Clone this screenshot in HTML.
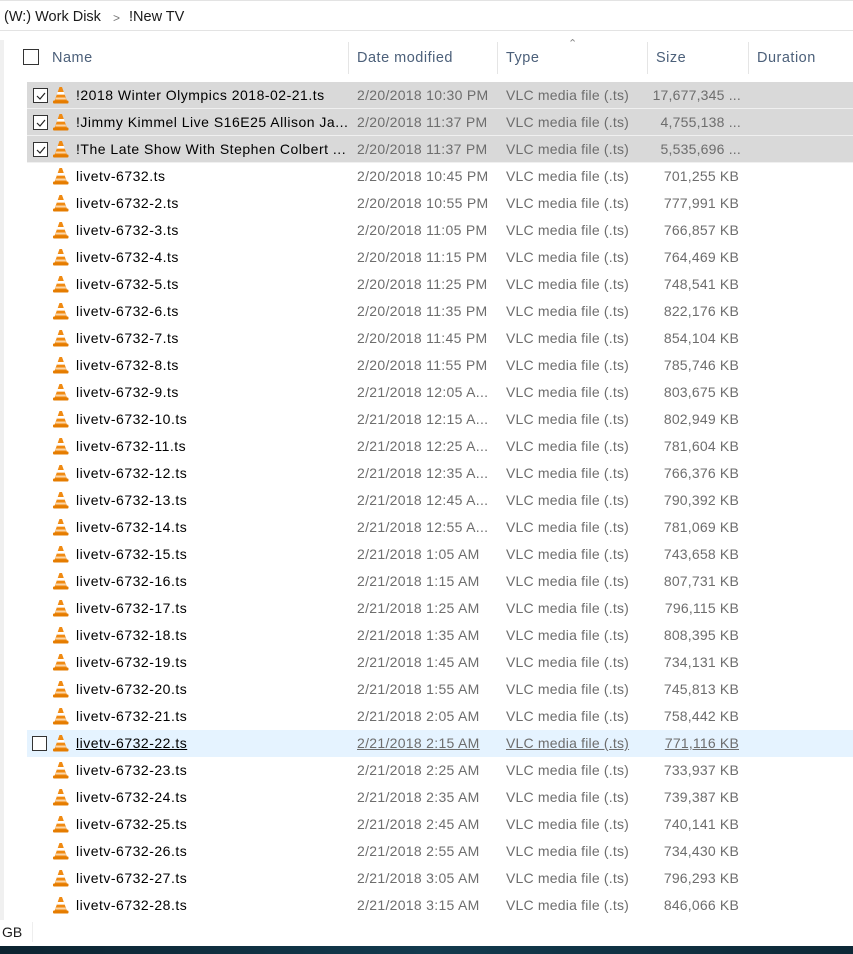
<!DOCTYPE html>
<html><head><meta charset="utf-8"><style>
*{margin:0;padding:0;box-sizing:border-box}
body{width:853px;height:954px;overflow:hidden;background:#fff;font-family:"Liberation Sans",sans-serif;font-size:14px;position:relative}
.crumb{position:absolute;left:0;top:0;width:853px;height:31px;border-bottom:1px solid #e3e3e3;border-top:1px solid #e3e3e3}
.crumb span{position:absolute;top:8px;color:#1a1a1a;font-size:14.5px}
.left{position:absolute;left:0;top:40px;width:4px;height:880px;background:#f0f0f0}
.hdr{position:absolute;top:40px;left:0;width:853px;height:36px}
.hdr span{position:absolute;top:10px;color:#4c607a;font-size:14.5px;letter-spacing:0.5px}
.sep{position:absolute;top:42px;width:1px;height:32px;background:#e5e5e5}
.cb{position:absolute;width:15px;height:15px;border:1px solid #333;background:#fff}
.r{position:absolute;left:27px;width:826px;height:27px}
.sel{background:#d9d9d9;border-bottom:1px solid #f0f0f0}
.hov{background:#e5f3ff}
.r span{position:absolute;top:5px;white-space:nowrap}
.n{left:49px;color:#000;letter-spacing:0.5px}
.d{left:330px;color:#6d6d6d;letter-spacing:0.3px}
.t{left:479px;color:#6d6d6d;letter-spacing:0.2px}
.s{right:114px;color:#6d6d6d;letter-spacing:0.2px}
.hov span{text-decoration:underline}
.r svg{position:absolute;left:25px;top:4px}
.r .cb{left:5px;top:6px}
.status{position:absolute;left:0;top:920px;width:853px;height:26px}
.status span{position:absolute;left:2px;top:4px;color:#1a1a1a}
.dark{position:absolute;left:0;top:946px;width:853px;height:8px;background:linear-gradient(90deg,#0c2330,#123a4e 50%,#0d2836)}
</style></head><body>
<div class="crumb"><span style="left:4px">(W:) Work Disk</span><span style="left:113px;color:#777;font-size:12px;top:10px">&gt;</span><span style="left:129px">!New TV</span></div>
<div class="left"></div>
<div class="hdr">
<div class="cb" style="left:23px;top:9px;width:16px;height:16px"></div>
<span style="left:52px">Name</span><span style="left:357px">Date modified</span><span style="left:506px">Type</span><span style="left:656px">Size</span><span style="left:757px">Duration</span>
<span style="left:568px;top:-3px;font-size:11px;color:#888">&#8963;</span>
</div>
<div class="sep" style="left:348px"></div><div class="sep" style="left:497px"></div><div class="sep" style="left:647px"></div><div class="sep" style="left:748px"></div>
<svg width="0" height="0" style="position:absolute"><defs><g id="cone"><path d="M7.5 1 L10 1 L15 15 L2.5 15 Z" fill="#f08a12"/><path d="M5.6 6 L11.9 6 L12.8 8.6 L4.7 8.6 Z" fill="#fff"/><path d="M4 11.5 L13.5 11.5 L14.2 13.5 L3.3 13.5Z" fill="#fbd6a8"/><rect x="1" y="14.5" width="15.5" height="3" rx="1" fill="#e57c00"/></g></defs></svg>
<div class="r sel" style="top:82px"><div class="cb" style="left:6px;top:6px"><svg style="left:1px;top:1px" width="12" height="12"><path d="M2 6 L5 9 L10 3" stroke="#222" stroke-width="1.2" fill="none"/></svg></div><svg width="17" height="18"><use href="#cone"/></svg><span class="n">!2018 Winter Olympics 2018-02-21.ts</span><span class="d">2/20/2018 10:30 PM</span><span class="t">VLC media file (.ts)</span><span class="s" style="right:112px">17,677,345 ...</span></div>
<div class="r sel" style="top:109px"><div class="cb" style="left:6px;top:6px"><svg style="left:1px;top:1px" width="12" height="12"><path d="M2 6 L5 9 L10 3" stroke="#222" stroke-width="1.2" fill="none"/></svg></div><svg width="17" height="18"><use href="#cone"/></svg><span class="n">!Jimmy Kimmel Live S16E25 Allison Ja...</span><span class="d">2/20/2018 11:37 PM</span><span class="t">VLC media file (.ts)</span><span class="s" style="right:112px">4,755,138 ...</span></div>
<div class="r sel" style="top:136px"><div class="cb" style="left:6px;top:6px"><svg style="left:1px;top:1px" width="12" height="12"><path d="M2 6 L5 9 L10 3" stroke="#222" stroke-width="1.2" fill="none"/></svg></div><svg width="17" height="18"><use href="#cone"/></svg><span class="n">!The Late Show With Stephen Colbert ...</span><span class="d">2/20/2018 11:37 PM</span><span class="t">VLC media file (.ts)</span><span class="s" style="right:112px">5,535,696 ...</span></div>
<div class="r" style="top:163px"><svg width="17" height="18"><use href="#cone"/></svg><span class="n">livetv-6732.ts</span><span class="d">2/20/2018 10:45 PM</span><span class="t">VLC media file (.ts)</span><span class="s">701,255 KB</span></div>
<div class="r" style="top:190px"><svg width="17" height="18"><use href="#cone"/></svg><span class="n">livetv-6732-2.ts</span><span class="d">2/20/2018 10:55 PM</span><span class="t">VLC media file (.ts)</span><span class="s">777,991 KB</span></div>
<div class="r" style="top:217px"><svg width="17" height="18"><use href="#cone"/></svg><span class="n">livetv-6732-3.ts</span><span class="d">2/20/2018 11:05 PM</span><span class="t">VLC media file (.ts)</span><span class="s">766,857 KB</span></div>
<div class="r" style="top:244px"><svg width="17" height="18"><use href="#cone"/></svg><span class="n">livetv-6732-4.ts</span><span class="d">2/20/2018 11:15 PM</span><span class="t">VLC media file (.ts)</span><span class="s">764,469 KB</span></div>
<div class="r" style="top:271px"><svg width="17" height="18"><use href="#cone"/></svg><span class="n">livetv-6732-5.ts</span><span class="d">2/20/2018 11:25 PM</span><span class="t">VLC media file (.ts)</span><span class="s">748,541 KB</span></div>
<div class="r" style="top:298px"><svg width="17" height="18"><use href="#cone"/></svg><span class="n">livetv-6732-6.ts</span><span class="d">2/20/2018 11:35 PM</span><span class="t">VLC media file (.ts)</span><span class="s">822,176 KB</span></div>
<div class="r" style="top:325px"><svg width="17" height="18"><use href="#cone"/></svg><span class="n">livetv-6732-7.ts</span><span class="d">2/20/2018 11:45 PM</span><span class="t">VLC media file (.ts)</span><span class="s">854,104 KB</span></div>
<div class="r" style="top:352px"><svg width="17" height="18"><use href="#cone"/></svg><span class="n">livetv-6732-8.ts</span><span class="d">2/20/2018 11:55 PM</span><span class="t">VLC media file (.ts)</span><span class="s">785,746 KB</span></div>
<div class="r" style="top:379px"><svg width="17" height="18"><use href="#cone"/></svg><span class="n">livetv-6732-9.ts</span><span class="d">2/21/2018 12:05 A...</span><span class="t">VLC media file (.ts)</span><span class="s">803,675 KB</span></div>
<div class="r" style="top:406px"><svg width="17" height="18"><use href="#cone"/></svg><span class="n">livetv-6732-10.ts</span><span class="d">2/21/2018 12:15 A...</span><span class="t">VLC media file (.ts)</span><span class="s">802,949 KB</span></div>
<div class="r" style="top:433px"><svg width="17" height="18"><use href="#cone"/></svg><span class="n">livetv-6732-11.ts</span><span class="d">2/21/2018 12:25 A...</span><span class="t">VLC media file (.ts)</span><span class="s">781,604 KB</span></div>
<div class="r" style="top:460px"><svg width="17" height="18"><use href="#cone"/></svg><span class="n">livetv-6732-12.ts</span><span class="d">2/21/2018 12:35 A...</span><span class="t">VLC media file (.ts)</span><span class="s">766,376 KB</span></div>
<div class="r" style="top:487px"><svg width="17" height="18"><use href="#cone"/></svg><span class="n">livetv-6732-13.ts</span><span class="d">2/21/2018 12:45 A...</span><span class="t">VLC media file (.ts)</span><span class="s">790,392 KB</span></div>
<div class="r" style="top:514px"><svg width="17" height="18"><use href="#cone"/></svg><span class="n">livetv-6732-14.ts</span><span class="d">2/21/2018 12:55 A...</span><span class="t">VLC media file (.ts)</span><span class="s">781,069 KB</span></div>
<div class="r" style="top:541px"><svg width="17" height="18"><use href="#cone"/></svg><span class="n">livetv-6732-15.ts</span><span class="d">2/21/2018 1:05 AM</span><span class="t">VLC media file (.ts)</span><span class="s">743,658 KB</span></div>
<div class="r" style="top:568px"><svg width="17" height="18"><use href="#cone"/></svg><span class="n">livetv-6732-16.ts</span><span class="d">2/21/2018 1:15 AM</span><span class="t">VLC media file (.ts)</span><span class="s">807,731 KB</span></div>
<div class="r" style="top:595px"><svg width="17" height="18"><use href="#cone"/></svg><span class="n">livetv-6732-17.ts</span><span class="d">2/21/2018 1:25 AM</span><span class="t">VLC media file (.ts)</span><span class="s">796,115 KB</span></div>
<div class="r" style="top:622px"><svg width="17" height="18"><use href="#cone"/></svg><span class="n">livetv-6732-18.ts</span><span class="d">2/21/2018 1:35 AM</span><span class="t">VLC media file (.ts)</span><span class="s">808,395 KB</span></div>
<div class="r" style="top:649px"><svg width="17" height="18"><use href="#cone"/></svg><span class="n">livetv-6732-19.ts</span><span class="d">2/21/2018 1:45 AM</span><span class="t">VLC media file (.ts)</span><span class="s">734,131 KB</span></div>
<div class="r" style="top:676px"><svg width="17" height="18"><use href="#cone"/></svg><span class="n">livetv-6732-20.ts</span><span class="d">2/21/2018 1:55 AM</span><span class="t">VLC media file (.ts)</span><span class="s">745,813 KB</span></div>
<div class="r" style="top:703px"><svg width="17" height="18"><use href="#cone"/></svg><span class="n">livetv-6732-21.ts</span><span class="d">2/21/2018 2:05 AM</span><span class="t">VLC media file (.ts)</span><span class="s">758,442 KB</span></div>
<div class="r hov" style="top:730px"><div class="cb"></div><svg width="17" height="18"><use href="#cone"/></svg><span class="n">livetv-6732-22.ts</span><span class="d">2/21/2018 2:15 AM</span><span class="t">VLC media file (.ts)</span><span class="s">771,116 KB</span></div>
<div class="r" style="top:757px"><svg width="17" height="18"><use href="#cone"/></svg><span class="n">livetv-6732-23.ts</span><span class="d">2/21/2018 2:25 AM</span><span class="t">VLC media file (.ts)</span><span class="s">733,937 KB</span></div>
<div class="r" style="top:784px"><svg width="17" height="18"><use href="#cone"/></svg><span class="n">livetv-6732-24.ts</span><span class="d">2/21/2018 2:35 AM</span><span class="t">VLC media file (.ts)</span><span class="s">739,387 KB</span></div>
<div class="r" style="top:811px"><svg width="17" height="18"><use href="#cone"/></svg><span class="n">livetv-6732-25.ts</span><span class="d">2/21/2018 2:45 AM</span><span class="t">VLC media file (.ts)</span><span class="s">740,141 KB</span></div>
<div class="r" style="top:838px"><svg width="17" height="18"><use href="#cone"/></svg><span class="n">livetv-6732-26.ts</span><span class="d">2/21/2018 2:55 AM</span><span class="t">VLC media file (.ts)</span><span class="s">734,430 KB</span></div>
<div class="r" style="top:865px"><svg width="17" height="18"><use href="#cone"/></svg><span class="n">livetv-6732-27.ts</span><span class="d">2/21/2018 3:05 AM</span><span class="t">VLC media file (.ts)</span><span class="s">796,293 KB</span></div>
<div class="r" style="top:892px"><svg width="17" height="18"><use href="#cone"/></svg><span class="n">livetv-6732-28.ts</span><span class="d">2/21/2018 3:15 AM</span><span class="t">VLC media file (.ts)</span><span class="s">846,066 KB</span></div>
<div class="status"><span>GB</span><div style="position:absolute;left:32px;top:2px;width:1px;height:20px;background:#eee"></div></div>
<div class="dark"></div>
</body></html>
